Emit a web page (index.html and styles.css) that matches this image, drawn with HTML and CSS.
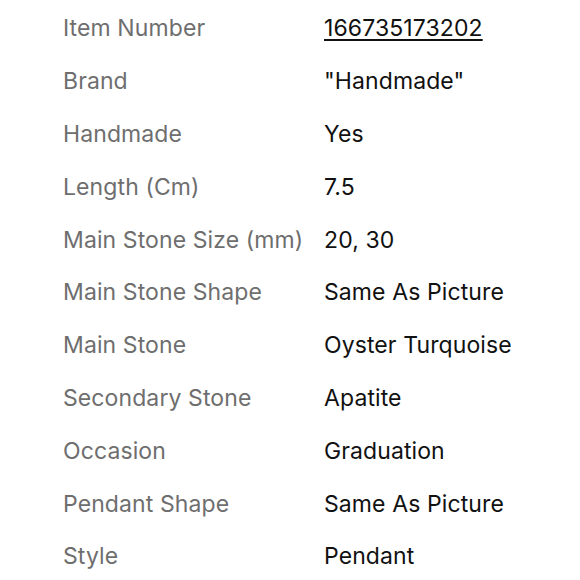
FILE: index.html
```html
<!DOCTYPE html>
<html>
<head>
<meta charset="utf-8">
<link rel="stylesheet" href="styles.css">
</head>
<body>
<dl class="specs">
  <dt>Item Number</dt><dd><span class="link">166735173202</span></dd>
  <dt>Brand</dt><dd>"Handmade"</dd>
  <dt>Handmade</dt><dd>Yes</dd>
  <dt>Length (Cm)</dt><dd>7.5</dd>
  <dt>Main Stone Size (mm)</dt><dd>20, 30</dd>
  <dt>Main Stone Shape</dt><dd>Same As Picture</dd>
  <dt>Main Stone</dt><dd>Oyster Turquoise</dd>
  <dt>Secondary Stone</dt><dd>Apatite</dd>
  <dt>Occasion</dt><dd>Graduation</dd>
  <dt>Pendant Shape</dt><dd>Same As Picture</dd>
  <dt>Style</dt><dd>Pendant</dd>
</dl>
</body>
</html>
```
FILE: styles.css
```css
html, body {
  margin: 0;
  padding: 0;
  background: #fff;
}
body {
  font-family: Inter, "Noto Sans", sans-serif;
  font-size: 23px;
  width: 580px;
  height: 580px;
  overflow: hidden;
}
.specs {
  margin: 0;
  padding: 2px 0 0 63px;
  display: grid;
  grid-template-columns: 261px auto;
  grid-auto-rows: 52.8px;
  align-items: center;
}
.specs dt {
  color: #6e6e6e;
  white-space: nowrap;
  letter-spacing: 0.1px;
}
.specs dd {
  margin: 0;
  color: #111;
  white-space: nowrap;
  letter-spacing: 0.1px;
}
.link {
  text-decoration: underline;
  text-underline-offset: 3px;
  text-decoration-thickness: 2px;
}
```
